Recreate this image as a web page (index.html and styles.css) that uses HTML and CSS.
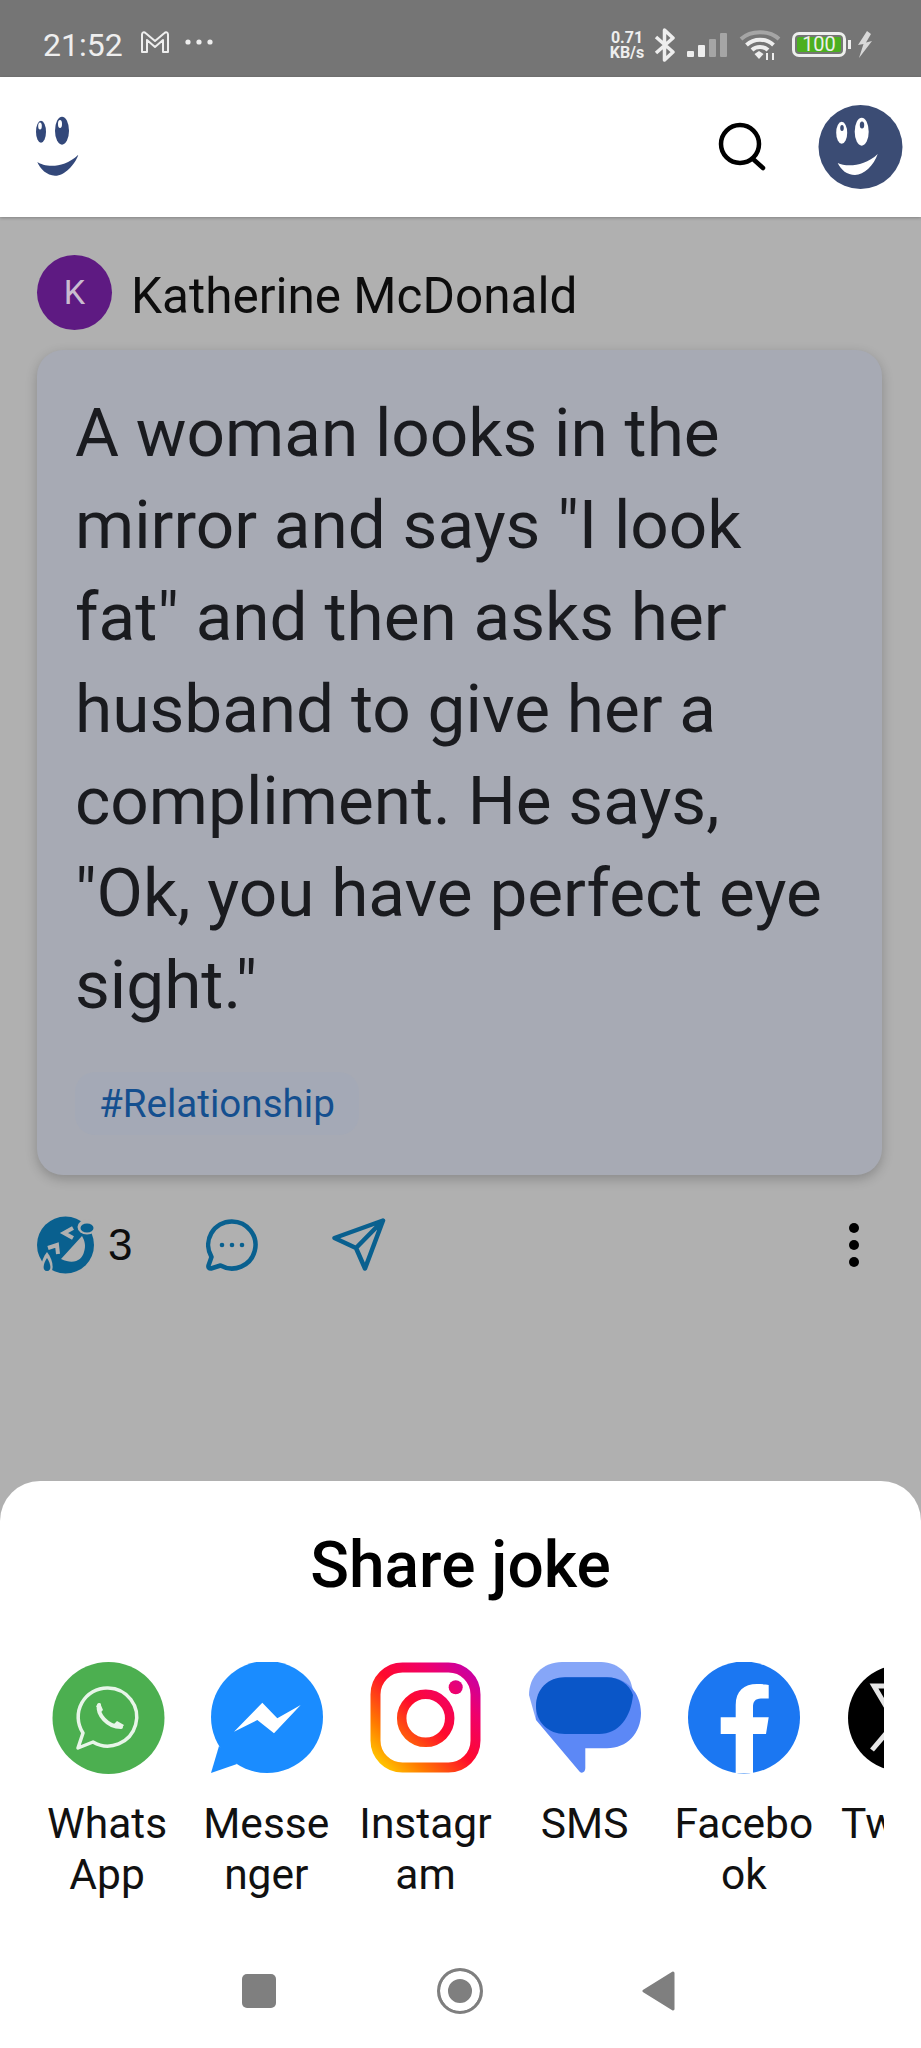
FILE: index.html
```html
<!DOCTYPE html>
<html lang="en">

<head>
    <meta charset="UTF-8">
    <meta name="viewport" content="width=device-width, initial-scale=1.0">
    <title>Share joke</title>
    <link rel="stylesheet" href="styles.css">
</head>

<body>
    <div class="status-bar">
        <span class="time">21:52</span>
        <svg class="gmail" width="30" height="24" viewBox="0 0 30 24">
            <path d="M2 22V4.500C2 2.500 4 1.500 5.500 3L15 11 24.500 3C26 1.500 28 2.500 28 4.500V22H23V10L15 17 7 10V22Z" fill="none" stroke="#eee" stroke-width="2" stroke-linejoin="round" />
        </svg>
        <svg class="dots" width="28" height="6" viewBox="0 0 28 6">
            <circle cx="3" cy="3" r="2.600" fill="#eee" />
            <circle cx="14" cy="3" r="2.600" fill="#eee" />
            <circle cx="25" cy="3" r="2.600" fill="#eee" />
        </svg>
        <div class="status-right">
            <div class="speed"><span>0.71</span><span>KB/s</span></div>
            <svg width="22" height="34" viewBox="0 0 22 34">
                <path d="M2 9L19 24 10.500 32V2L19 10 2 25" fill="none" stroke="#eee" stroke-width="3.500" stroke-linejoin="round" />
            </svg>
            <svg class="signal" width="42" height="28" viewBox="0 0 42 28">
                <rect x="0" y="20" width="7" height="6" rx="1" fill="#eee" />
                <rect x="11" y="14" width="7" height="12" rx="1" fill="#eee" />
                <rect x="22" y="8" width="7" height="18" rx="1" fill="#a5a5a5" />
                <rect x="33" y="2" width="7" height="24" rx="1" fill="#a5a5a5" />
            </svg>
            <svg class="wifi" width="42" height="30" viewBox="0 0 42 30">
                <path d="M2 9C12 0 30 0 40 9" fill="none" stroke="#a5a5a5" stroke-width="4" />
                <path d="M7.500 15C15 8 27 8 34.500 15M13 20C17 16 25 16 29 20" fill="none" stroke="#eee" stroke-width="4" />
                <path d="M15.500 24L20 21 24.500 24 20 29Z" fill="#eee" />
                <path d="M28 23V30M34 23V30" stroke="#eee" stroke-width="2" />
            </svg>
            <div class="battery"><span>100</span></div>
            <div class="battery-nub"></div>
            <svg class="bolt" width="16" height="27" viewBox="0 0 16 27">
                <path d="M10 0L1 14 6.500 13 2 27 15 10 9 11.500 14 3Z" fill="#d8d8d8" />
            </svg>
        </div>
    </div>

    <div class="top-bar">
        <svg class="logo" width="60" height="80" viewBox="30 110 60 80">
            <ellipse cx="41" cy="132.700" rx="5" ry="11" fill="#33487a" />
            <ellipse cx="62" cy="131.700" rx="7" ry="14" fill="#33487a" />
            <ellipse cx="40" cy="127" rx="1.800" ry="3.500" fill="#fff" />
            <ellipse cx="60" cy="125" rx="2" ry="4" fill="#fff" />
            <path d="M37.300 163C44 167.500 62 171 78.300 155.700 75 166 64 177 55 176.700 47 176.500 40 170 37.300 163Z" fill="#33487a" />
        </svg>
        <svg class="search" width="48" height="50" viewBox="0 0 48 50">
            <circle cx="22" cy="22" r="19" fill="none" stroke="#000" stroke-width="4.500" />
            <path d="M35 37L45 46" stroke="#000" stroke-width="4.500" stroke-linecap="round" />
        </svg>
        <svg class="avatar-me" width="85" height="85" viewBox="0 0 85 85">
            <circle cx="42.500" cy="42" r="42" fill="#3b4c74" />
            <ellipse cx="23.700" cy="27.700" rx="5.500" ry="11" fill="#fff" />
            <ellipse cx="43.700" cy="26.700" rx="7" ry="14" fill="#fff" />
            <ellipse cx="24" cy="23" rx="1.800" ry="3" fill="#3b4c74" />
            <ellipse cx="44" cy="20" rx="2.200" ry="3.500" fill="#3b4c74" />
            <path d="M19.700 58C28 62 46 62 59.700 49 56 60 46 70 37 70 29 70 23 65 19.700 58Z" fill="#fff" />
        </svg>
    </div>

    <div class="content">
        <div class="author">
            <div class="author-pic">K</div>
            <span class="author-name">Katherine McDonald</span>
        </div>

        <div class="joke-card">
            <p class="joke-text">A woman looks in the mirror and says "I look fat" and then asks her husband to give her a compliment. He says, "Ok, you have perfect eye sight."</p>
            <span class="tag">#Relationship</span>
        </div>

        <div class="actions">
            <svg class="act-laugh" width="60" height="60" viewBox="0 0 60 60">
                <circle cx="29.500" cy="30" r="28.500" fill="#09608f" />
                <path d="M46 21L25 44C38 50 46 45 48 37 50 31 49 26 46 21Z" fill="#b0b0b0" />
                <path d="M37 13L28 18 37 23M12 33L21 30 22 39" fill="none" stroke="#b0b0b0" stroke-width="4" />
                <ellipse cx="51" cy="12" rx="9.500" ry="7.500" fill="#b0b0b0" />
                <ellipse cx="51" cy="13" rx="6.500" ry="4.500" fill="#09608f" />
                <path d="M11 37C4 46 3 58 11 59 19 58 18 46 11 37Z" fill="#b0b0b0" />
                <path d="M11 43C7 49 6 56 11 56 16 56 15 49 11 43Z" fill="#09608f" />
            </svg>
            <span class="act-count">3</span>
            <svg class="act-comment" width="52" height="52" viewBox="0 0 52 52">
                <path d="M26 2.500A23.500 23.500 0 1 1 14.500 46.500L5 49.500C3 49.500 2 48.500 2.500 46.500L5.500 38A23.500 23.500 0 0 1 26 2.500Z" fill="none" stroke="#09608f" stroke-width="4.500" stroke-linejoin="round" />
                <circle cx="16" cy="26" r="2.300" fill="#09608f" />
                <circle cx="26" cy="26" r="2.300" fill="#09608f" />
                <circle cx="36" cy="26" r="2.300" fill="#09608f" />
            </svg>
            <svg class="act-send" width="54" height="54" viewBox="0 0 54 54">
                <path d="M51 2.500L2.500 20 24 30 33 50.500ZM51 2.500L24 30" fill="none" stroke="#09608f" stroke-width="4.500" stroke-linejoin="round" />
            </svg>
            <svg class="act-more" width="12" height="46" viewBox="0 0 12 46">
                <circle cx="6" cy="6" r="5" fill="#000" />
                <circle cx="6" cy="23" r="5" fill="#000" />
                <circle cx="6" cy="40" r="5" fill="#000" />
            </svg>
        </div>
    </div>

    <div class="sheet">
        <h2 class="sheet-title">Share joke</h2>
        <div class="share-row">
            <div class="share-item">
                <svg width="114" height="112" viewBox="0 0 114 112">
                    <circle cx="56.500" cy="56" r="56" fill="#4caf50" />
                    <path d="M56 26A29 29 0 1 1 41 80L26 86 31 71A29 29 0 0 1 56 26Z" fill="none" stroke="#e8f5e9" stroke-width="3.500" stroke-linejoin="round" />
                    <path d="M47 43C45 52 55 65 69 65" fill="none" stroke="#e8f5e9" stroke-width="4" stroke-linecap="round" />
                    <path d="M44 44L48 41 51 48 48 51ZM62 62L65 59 72 63 69 67Z" fill="#e8f5e9" />
                </svg>
                <span>Whats<br>App</span>
            </div>
            <div class="share-item">
                <svg width="114" height="112" viewBox="0 0 114 112">
                    <circle cx="56" cy="55" r="56" fill="#1a8cff" />
                    <path d="M8 84L0 111 26 102Z" fill="#1a8cff" />
                    <path d="M23 69.700L51.300 40.700 66.300 56.300 89.700 43 63 71.300 46.300 58Z" fill="#fff" />
                </svg>
                <span>Messe<br>nger</span>
            </div>
            <div class="share-item">
                <svg width="114" height="112" viewBox="0 0 114 112">
                    <defs>
                        <linearGradient id="insta" gradientUnits="userSpaceOnUse" x1="8" y1="108" x2="108" y2="6">
                            <stop offset="0" stop-color="#ffd600" />
                            <stop offset="0.22" stop-color="#ff7a00" />
                            <stop offset="0.5" stop-color="#ff0a2c" />
                            <stop offset="0.75" stop-color="#f0006a" />
                            <stop offset="1" stop-color="#c000b0" />
                        </linearGradient>
                    </defs>
                    <rect x="5.500" y="5.500" width="100" height="100" rx="27" fill="none" stroke="url(#insta)" stroke-width="10" />
                    <circle cx="55.700" cy="56.300" r="24" fill="none" stroke="url(#insta)" stroke-width="9.500" />
                    <circle cx="85.700" cy="25.300" r="7" fill="url(#insta)" />
                </svg>
                <span>Instagr<br>am</span>
            </div>
            <div class="share-item">
                <svg width="114" height="112" viewBox="0 0 114 112">
                    <path d="M0 33C0 14 14 0 33 0H72C90 0 104 14 104 33 104 50 90 58 72 58H7Z" fill="#86a6f8" />
                    <path d="M7 58L50.700 109.700C53 112 56.300 110 56.300 106.300V86.300H78C98 86.300 112 71 112 51 112 31 98 15.300 78 15.300H36C18 15.300 7 30 7 46Z" fill="#5c88f6" />
                    <path d="M7 44C7 27 19 15.300 36 15.300H78C90 15.300 100 22 104 33 102 55 90 72 70 72H36C19 72 7 60 7 44Z" fill="#0a56c8" />
                </svg>
                <span>SMS</span>
            </div>
            <div class="share-item">
                <svg width="114" height="112" viewBox="0 0 114 112">
                    <circle cx="56" cy="55.500" r="56" fill="#1b77f2" />
                    <path d="M47.700 111V72H32.700V55.300H47.700V43C47.700 29 56 22 69 22 74 22 78 22.500 80.700 23V36.500H73C67 36.500 65 40 65 45V55.300H80.700L78 72H65V111Z" fill="#fff" />
                </svg>
                <span>Facebo<br>ok</span>
            </div>
            <div class="share-item item-x">
                <svg width="114" height="112" viewBox="0 0 114 112">
                    <circle cx="57" cy="56" r="53" fill="#000" />
                    <path d="M30 24H46L84 88H68Z" fill="none" stroke="#e6e6e6" stroke-width="5" />
                    <path d="M82 24L60 50M50 62L28 88" stroke="#e6e6e6" stroke-width="5" />
                </svg>
                <span>Twitte<br>r</span>
            </div>
        </div>
        <div class="nav-bar">
            <div class="nav-square"></div>
            <div class="nav-home"></div>
            <svg width="34" height="40" viewBox="0 0 34 40">
                <path d="M31 2L2 20 31 38Z" fill="#7f7f7f" stroke="#7f7f7f" stroke-width="3" stroke-linejoin="round" />
            </svg>
        </div>
    </div>
</body>

</html>
```

FILE: styles.css
```css
html,
body {
    width: 921px;
    height: 2048px;
    margin: 0;
    padding: 0;
    overflow: hidden;
}

body {
    display: flex;
    flex-direction: column;
    background: #b0b0b0;
    font-family: Roboto, sans-serif;
}

.status-bar {
    height: 77px;
    flex: none;
    display: flex;
    align-items: center;
    padding: 12px 48px 0 43px;
    background: #757575;
    color: #eee;
    box-sizing: border-box;
}

.time {
    font-size: 32px;
}

.gmail {
    margin: -6px 0 0 17px;
}

.dots {
    margin: -5px 0 0 15px;
}

.status-right {
    margin-left: auto;
    display: flex;
    align-items: center;
}

.speed {
    display: flex;
    flex-direction: column;
    font-size: 16px;
    line-height: 15px;
    font-weight: 700;
    align-items: center;
    width: 36px;
    margin-right: 9px;
}

.signal {
    margin-left: 11px;
}

.wifi {
    margin-left: 10px;
}

.battery {
    width: 54px;
    height: 25px;
    margin-left: 11px;
    border: 3px solid #eee;
    border-radius: 7px;
    box-sizing: border-box;
    background: #4caf20;
    box-shadow: inset 0 0 0 2px #757575;
    font-size: 20px;
    line-height: 19px;
    text-align: center;
}

.battery-nub {
    width: 3px;
    height: 9px;
    margin-left: 2px;
    background: #eee;
}

.bolt {
    margin-left: 6px;
}

.top-bar {
    height: 140px;
    flex: none;
    display: flex;
    align-items: center;
    padding: 0 18px 0 30px;
    background: #fff;
    box-shadow: 0 1px 3px rgba(0, 0, 0, 0.25);
    position: relative;
    box-sizing: border-box;
}

.logo {
    margin-top: 3px;
}

.search {
    margin-left: auto;
    margin-right: 52px;
}

.content {
    padding: 38px 37px 0 37px;
}

.author {
    display: flex;
    align-items: center;
    gap: 19px;
}

.author-pic {
    width: 75px;
    height: 75px;
    border-radius: 50%;
    background: #5e1a82;
    color: #c9bcd0;
    font-size: 34px;
    line-height: 75px;
    text-align: center;
}

.author-name {
    font-size: 49.5px;
    margin-top: 7px;
    color: #0d0d0d;
}

.joke-card {
    margin-top: 20px;
    height: 825px;
    margin-right: 2px;
    padding: 37px 38px 0;
    border-radius: 26px;
    background: #a7aab4;
    box-shadow: 0 4px 12px rgba(0, 0, 0, 0.22);
    box-sizing: border-box;
}

.joke-text {
    margin: 0;
    font-size: 67.5px;
    line-height: 92px;
    color: #1a1b1f;
}

.tag {
    display: inline-block;
    margin-top: 41px;
    padding: 0 24px;
    height: 63px;
    line-height: 63px;
    font-size: 38.6px;
    color: #144f8f;
    background: #a4a9b6;
    border-radius: 20px;
}

.actions {
    margin-top: 40px;
    display: flex;
    align-items: center;
    height: 60px;
}

.act-laugh {
    margin-left: -1px;
}

.act-count {
    font-family: "Liberation Sans", sans-serif;
    font-size: 44px;
    margin-left: 12px;
    width: 24px;
    color: #0d0d0d;
}

.act-comment {
    margin-left: 74px;
}

.act-send {
    margin-left: 74px;
}

.act-more {
    margin-left: auto;
    margin-right: 24px;
}

.sheet {
    margin-top: auto;
    height: 567px;
    flex: none;
    background: #fff;
    border-radius: 40px 40px 0 0;
    position: relative;
    display: flex;
    flex-direction: column;
}

.sheet-title {
    margin: 50px 0 0;
    font-size: 64px;
    line-height: 70px;
    font-weight: 500;
    text-align: center;
    color: #000;
}

.share-row {
    display: flex;
    margin: 61px 37px 0 29px;
    overflow: hidden;
}

.share-item {
    flex: 0 0 159.2px;
    display: flex;
    flex-direction: column;
    align-items: center;
    font-size: 42.5px;
    line-height: 51px;
    color: #111;
    text-align: center;
    white-space: nowrap;
}

.share-item svg {
    margin-bottom: 24px;
}

.share-item span {
    margin-right: 3px;
}

.share-item.item-x {
    flex-basis: 152px;
}

.nav-bar {
    margin-top: auto;
    height: 114px;
    display: flex;
    align-items: center;
    padding-left: 242px;
    box-sizing: border-box;
}

.nav-square {
    width: 34px;
    height: 34px;
    background: #7f7f7f;
    border-radius: 5px;
}

.nav-home {
    width: 46px;
    height: 46px;
    margin-left: 161px;
    border: 3px solid #7f7f7f;
    border-radius: 50%;
    box-sizing: border-box;
    background: #7f7f7f;
    box-shadow: inset 0 0 0 8px #fff;
}

.nav-bar svg {
    margin-left: 159px;
}
```
